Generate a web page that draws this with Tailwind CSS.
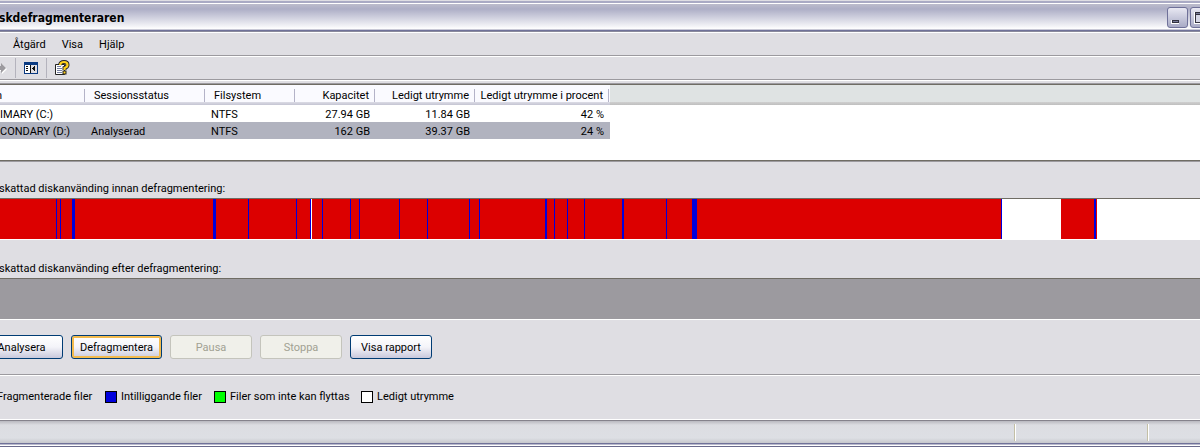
<!DOCTYPE html>
<html lang="sv">
<head>
  <meta charset="UTF-8">
  <meta name="viewport" content="width=device-width, initial-scale=1.0">
  <title>Diskdefragmenteraren</title>
  <script src="https://cdn.jsdelivr.net/npm/@tailwindcss/browser@4"></script>
</head>
<body class="overflow-x-hidden bg-[#dfdee3] font-['Roboto','DejaVu_Sans_Condensed',sans-serif] text-[11px] leading-4 text-black">
  <!-- Title bar -->
  <header class="border-t border-[#dfdee3]">
    <div class="h-[2px] bg-[#a9aac4]"></div>
    <div class="h-px bg-white"></div>
    <div class="flex h-[25px] items-center justify-between overflow-hidden bg-linear-to-b from-[#bcbccc] via-[#adaec6] via-20% to-white">
      <h1 class="-ml-px pt-[3px] font-['DejaVu_Sans_Condensed','DejaVu_Sans',sans-serif] text-[12px] font-bold whitespace-nowrap">skdefragmenteraren</h1>
      <div class="-mr-[11px] flex gap-[2px] pt-px">
        <button type="button" aria-label="Minimera" class="size-[21px] rounded-[3px] border border-[#6f7199] bg-linear-to-b from-[#e8e8f2] to-[#a9abc6]">
          <svg class="size-[19px]" viewBox="0 0 19 19" shape-rendering="crispEdges"><path d="M3 12h8v4H3z" fill="#fff"/><path d="M4 12h7v3H4z" fill="#33333f"/><path d="M5 13h5v1H5z" fill="#777a99"/></svg>
        </button>
        <button type="button" aria-label="Maximera" class="size-[21px] rounded-[3px] border border-[#6f7199] bg-linear-to-b from-[#e8e8f2] to-[#a9abc6]">
          <svg class="size-[19px]" viewBox="0 0 19 19" shape-rendering="crispEdges"><path d="M3 4h12v12H3z" fill="#fff"/><path d="M4 4h11v11H4z" fill="#33333f"/><path d="M5 7h9v7H5z" fill="#d5d6e5"/><path d="M5 5h9v1H5z" fill="#777a99"/></svg>
        </button>
      </div>
    </div>
    <div class="h-[3px] border-y border-t-[#c9c9d6] border-b-[#8a8a9c] bg-[#6f7199]"></div>
  </header>

  <!-- Menu -->
  <nav class="flex h-[24px] items-center gap-4 border-t border-b border-t-white border-b-[#9c9a9f] pt-[2px] pl-[13px]">
    <button type="button">Åtgärd</button>
    <button type="button">Visa</button>
    <button type="button">Hjälp</button>
  </nav>

  <!-- Toolbar -->
  <div class="flex h-[24px] items-center border-t border-b border-t-white border-b-[#9c9a9f]">
    <button type="button" aria-label="Framåt" disabled>
      <svg class="h-4 w-[15px]" viewBox="0 0 15 16"><path d="M0 7h2V4l5 5-5 5v-3H0z" fill="#fff"/><path d="M0 6h1V3l5 5-5 5v-3H0z" fill="#9c9a9f"/></svg>
    </button>
    <div class="h-5 w-px bg-[#b4b3bd]"></div>
    <button type="button" aria-label="Visa konsolträd" class="ml-[8px]">
      <svg class="h-4 w-[14px]" viewBox="0 0 14 16" shape-rendering="crispEdges"><path d="M0 2h14v12H0z" fill="#0a3a82"/><path d="M1 5h6v8H1z" fill="#fff"/><path d="M7 5h6v8H7z" fill="#dfdee3"/><path d="M6 5h1v8H6zM2 6h2v1H2zM2 8h2v1H2zM2 10h2v1H2zM10 6h1v5h-1zM9 7h1v3H9zM8 8h1v1H8z" fill="#111"/></svg>
    </button>
    <div class="ml-[8px] h-5 w-px bg-[#b4b3bd]"></div>
    <button type="button" aria-label="Hjälp" class="ml-[8px]">
      <svg class="size-4" viewBox="0 0 16 16"><path d="M.5 4.500h9v10h-9z" fill="#fff" stroke="#222"/><path d="M2 6.500h4M2 8.500h5M2 10.500h5M2 12.500h5" stroke="#7780a0"/><path d="M5 5Q5.500 2 9 2t3.500 3q0 2-3 3v2" fill="none" stroke="#222" stroke-width="4"/><path d="M7.500 10.500h4v4h-4z" fill="#222"/><path d="M5 5Q5.500 2 9 2t3.500 3q0 2-3 3v2" fill="none" stroke="#ffd11a" stroke-width="2.200"/><path d="M8.500 11.500h2v2h-2z" fill="#ffd11a"/></svg>
    </button>
  </div>

  <!-- Volumes -->
  <section class="border-t border-white">
    <div class="mt-[2px] h-[79px] border-y border-[#9c9a9f] bg-white">
      <div class="h-full overflow-hidden border-y border-[#6f6c64]">
        <div class="h-full bg-[linear-gradient(#dfe3e3_17px,#cfcfcf_17px,#bfbfbf_20px,#fff_20px)]">
          <table class="w-[610px] table-fixed border-collapse text-left whitespace-nowrap">
            <colgroup><col class="w-[85px]"><col class="w-[120px]"><col class="w-[90px]"><col class="w-[80px]"><col class="w-[100px]"><col class="w-[135px]"></colgroup>
            <thead>
              <tr class="h-5 bg-[linear-gradient(#fafaff_17px,#dcdce6_17px,#c4c4d2_20px)]">
                <th class="p-0 font-normal"><div class="-ml-1 h-[13px] border-r border-[#b4b3c8] leading-[14px]">n</div></th>
                <th class="p-0 font-normal"><div class="h-[13px] border-r border-[#b4b3c8] pl-[9px] leading-[14px]">Sessionsstatus</div></th>
                <th class="p-0 font-normal"><div class="h-[13px] border-r border-[#b4b3c8] pl-[9px] leading-[14px]">Filsystem</div></th>
                <th class="p-0 text-right font-normal"><div class="h-[13px] border-r border-[#b4b3c8] pr-[5px] leading-[14px]">Kapacitet</div></th>
                <th class="p-0 text-right font-normal"><div class="h-[13px] border-r border-[#b4b3c8] pr-[5px] leading-[14px]">Ledigt utrymme</div></th>
                <th class="p-0 pr-px text-right font-normal"><div class="h-[13px] border-r border-[#b4b3c8] pr-[5px] leading-[14px]">Ledigt utrymme i procent</div></th>
              </tr>
            </thead>
            <tbody class="leading-[15px]">
              <tr class="h-[17px]">
                <td class="p-0 pt-[2px]">IMARY (C:)</td>
                <td class="p-0 pt-[2px] pl-[6px]"></td>
                <td class="p-0 pt-[2px] pl-[6px]">NTFS</td>
                <td class="p-0 pt-[2px] pr-[5px] text-right">27.94 GB</td>
                <td class="p-0 pt-[2px] pr-[5px] text-right">11.84 GB</td>
                <td class="p-0 pt-[2px] pr-[6px] text-right">42 %</td>
              </tr>
              <tr class="h-[17px] bg-[#b1b3bf]">
                <td class="p-0 pt-[2px]">CONDARY (D:)</td>
                <td class="p-0 pt-[2px] pl-[6px]">Analyserad</td>
                <td class="p-0 pt-[2px] pl-[6px]">NTFS</td>
                <td class="p-0 pt-[2px] pr-[5px] text-right">162 GB</td>
                <td class="p-0 pt-[2px] pr-[5px] text-right">39.37 GB</td>
                <td class="p-0 pt-[2px] pr-[6px] text-right">24 %</td>
              </tr>
            </tbody>
          </table>
        </div>
      </div>
    </div>
  </section>

  <!-- Disk usage -->
  <section class="pt-[19px]">
    <h2 class="-ml-px">skattad diskanvänding innan defragmentering:</h2>
    <div class="mt-px border-t border-b border-t-[#6f6c64] border-b-white bg-white">
      <svg class="block h-10 w-full" viewBox="0 0 1200 40" preserveAspectRatio="none" shape-rendering="crispEdges">
        <path d="M0 0h1002v40H0zM1061 0h36v40h-36z" fill="#dc0000"/>
        <path d="M56 0h1v40h-1zM60 0h1v40h-1zM72 0h3v40h-3zM213 0h3v40h-3zM248 0h1v40h-1zM296 0h1v40h-1zM310 0h1v40h-1zM322 0h1v40h-1zM350 0h1v40h-1zM359 0h1v40h-1zM399 0h1v40h-1zM427 0h1v40h-1zM469 0h1v40h-1zM479 0h1v40h-1zM545 0h2v40h-2zM554 0h1v40h-1zM567 0h1v40h-1zM584 0h1v40h-1zM622 0h2v40h-2zM666 0h1v40h-1zM692 0h5v40h-5zM1001 0h1v40h-1zM1094 0h2v40h-2z" fill="#0000dc"/>
        <path d="M311 0h1v40h-1z" fill="#fff"/>
      </svg>
    </div>
    <h2 class="mt-[21px] -ml-px">skattad diskanvänding efter defragmentering:</h2>
    <div class="mt-px h-[42px] border-t border-b border-t-[#6f6c64] border-b-white bg-[#9c9a9f]"></div>
  </section>

  <!-- Actions -->
  <div class="-ml-5 flex gap-2 border-b border-[#9c9a9f] pt-[15px] pb-[15px] whitespace-nowrap">
    <button type="button" class="h-6 w-[83px] rounded-[3px] border border-[#003c74] bg-linear-to-b from-white via-[#f4f4f9] to-[#c9c9dc] pt-[2px]">Analysera</button>
    <button type="button" class="h-6 w-[91px] rounded-[3px] border border-[#003c74] bg-linear-to-b from-white via-[#f4f4f9] to-[#c9c9dc] pt-[2px] inset-ring-2 inset-ring-[#f3bb4e]">Defragmentera</button>
    <button type="button" disabled class="h-6 w-[82px] rounded-[3px] border border-[#c4c4bc] bg-[#f0f0ea] pt-[2px] text-[#a1a192]">Pausa</button>
    <button type="button" disabled class="h-6 w-[82px] rounded-[3px] border border-[#c4c4bc] bg-[#f0f0ea] pt-[2px] text-[#a1a192]">Stoppa</button>
    <button type="button" class="h-6 w-[82px] rounded-[3px] border border-[#003c74] bg-linear-to-b from-white via-[#f4f4f9] to-[#c9c9dc] pt-[2px]">Visa rapport</button>
  </div>

  <!-- Legend -->
  <ul class="-ml-[3px] flex h-[45px] items-center border-t border-b border-t-white border-b-white pb-[2px] whitespace-nowrap">
    <li class="w-[108px]">Fragmenterade filer</li>
    <li class="flex w-[109px] items-center gap-1"><span class="size-3 border border-black bg-[#0000dc]"></span>Intilliggande filer</li>
    <li class="flex w-[147px] items-center gap-1"><span class="size-3 border border-black bg-[#00ff00]"></span>Filer som inte kan flyttas</li>
    <li class="flex items-center gap-1"><span class="size-3 border border-black bg-white"></span>Ledigt utrymme</li>
  </ul>

  <!-- Status bar -->
  <footer>
    <div class="flex h-[23px] justify-end border-t border-[#85838c] bg-[linear-gradient(#b9b9c0,#dcdde2_4px,#dddfe4_17px,#c6c7cc)] pt-[3px] pb-[2px]">
      <div class="w-[133px] border-l border-[#c3bfa6]"><div class="h-full border-l border-white"></div></div>
      <div class="w-[53px] border-l border-[#c3bfa6]"><div class="h-full border-l border-white"></div></div>
    </div>
    <div class="h-[2px] border-t border-[#6f7199] bg-[#b9b9cc]"></div>
    <div class="h-[2px] border-t border-b border-t-white border-b-[#6a6a8c]"></div>
  </footer>
</body>
</html>
